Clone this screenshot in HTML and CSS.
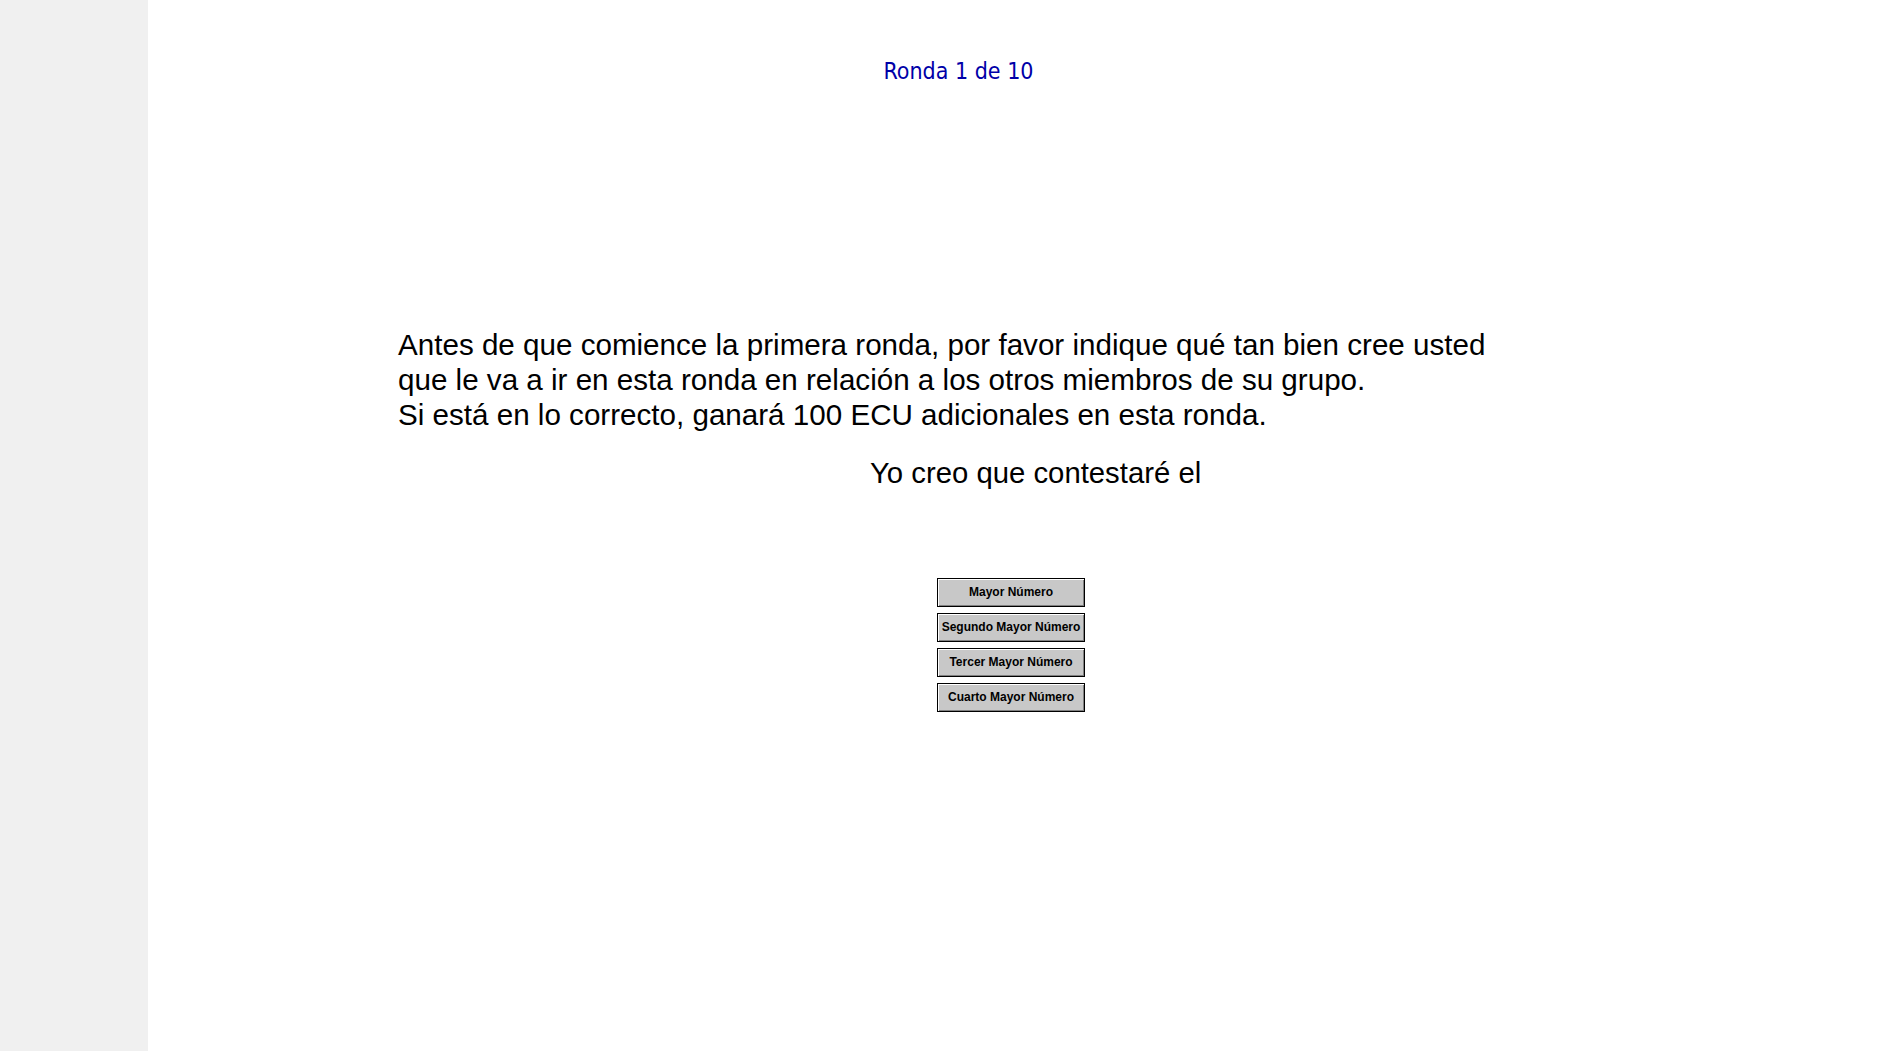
FILE: index.html
```html
<!DOCTYPE html>
<html lang="es">
<head>
<meta charset="utf-8">
<title>Ronda 1 de 10</title>
<link rel="stylesheet" href="styles.css">
</head>
<body>
<div class="page">
  <aside class="sidebar"></aside>
  <main class="main">
    <div class="stage">
      <h1 class="round">Ronda 1 de 10</h1>
      <p class="question">Antes de que comience la primera ronda, por favor indique qué tan bien cree usted<br>que le va a ir en esta ronda en relación a los otros miembros de su grupo.<br>Si está en lo correcto, ganará 100 ECU adicionales en esta ronda.</p>
      <p class="prompt">Yo creo que contestaré el</p>
      <div class="choices">
        <button class="choice">Mayor Número</button>
        <button class="choice">Segundo Mayor Número</button>
        <button class="choice">Tercer Mayor Número</button>
        <button class="choice">Cuarto Mayor Número</button>
      </div>
    </div>
  </main>
</div>
</body>
</html>
```

FILE: styles.css
```css
html, body {
  margin: 0;
  padding: 0;
  height: 100%;
  background: #ffffff;
}

.page {
  display: flex;
  min-height: 100vh;
}

.sidebar {
  flex: 0 0 148px;
  background: #f0f0f0;
}

.main {
  flex: 1 1 auto;
  padding-left: 250px;
}

.stage {
  width: 1121px;
  display: flex;
  flex-direction: column;
}

.round {
  margin: 58px 0 0 0;
  font-family: "DejaVu Sans Condensed", "DejaVu Sans", sans-serif;
  font-weight: normal;
  font-size: 23px;
  line-height: 27px;
  color: #0000a8;
  text-align: center;
}

.question {
  margin: 242px 0 0 0;
  font-family: "Liberation Sans", Arial, sans-serif;
  font-size: 29.6px;
  line-height: 35px;
  color: #000000;
  white-space: nowrap;
}

.prompt {
  margin: 23px 0 0 472px;
  font-family: "Liberation Sans", Arial, sans-serif;
  font-size: 29.3px;
  line-height: 35px;
  color: #000000;
  white-space: nowrap;
}

.choices {
  margin: 87.5px 0 0 539px;
  display: flex;
  flex-direction: column;
  gap: 6px;
  width: 148px;
}

.choice {
  box-sizing: border-box;
  width: 148px;
  height: 29px;
  padding: 0;
  margin: 0;
  background: #c8c8c8;
  border: 1px solid #000000;
  box-shadow: inset 1px 1px 0 #ffffff, inset -1px -1px 0 #808080;
  font-family: "Liberation Sans", Arial, sans-serif;
  font-weight: bold;
  font-size: 12px;
  color: #000000;
  text-align: center;
  white-space: nowrap;
  overflow: hidden;
  border-radius: 0;
}
```
